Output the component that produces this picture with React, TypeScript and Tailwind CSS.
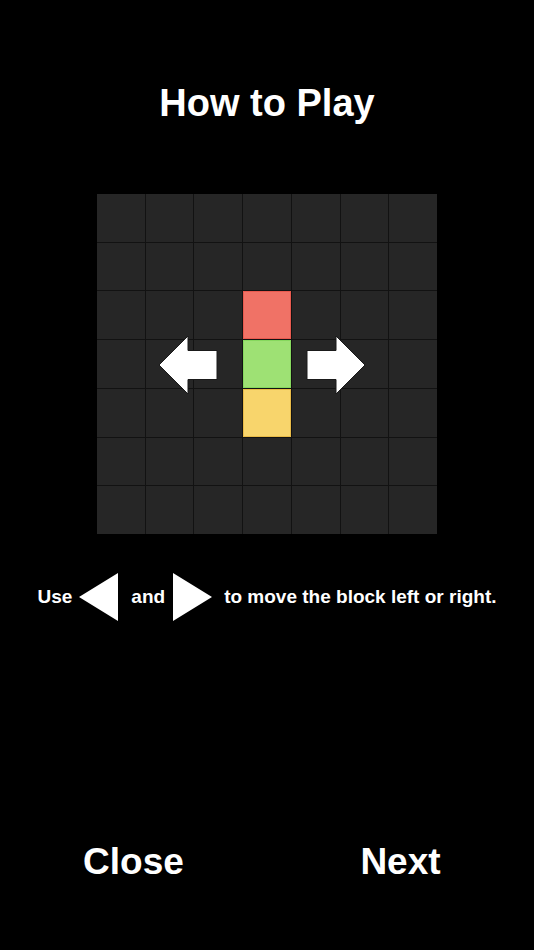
import React from "react";

const font = { fontFamily: '"Liberation Sans", Arial, sans-serif' };

function Cell({ r, c }: { r: number; c: number }) {
  if (c === 3 && r === 2)
    return <div className="bg-[#f07266] border border-[#e85a4f]" />;
  if (c === 3 && r === 3)
    return <div className="bg-[#9ee174] border border-[#86d85e]" />;
  if (c === 3 && r === 4)
    return <div className="bg-[#f8d56c] border border-[#e9bb48]" />;
  return <div className="bg-[#262626]" />;
}

export default function App() {
  const cells = [];
  for (let r = 0; r < 7; r++)
    for (let c = 0; c < 7; c++) cells.push(<Cell key={`${r}-${c}`} r={r} c={c} />);

  return (
    <div className="w-[534px] h-[950px] bg-black text-white flex flex-col items-center" style={font}>
      <h1 className="mt-[84px] h-[38px] leading-none text-[38px] font-bold">How to Play</h1>

      <div className="relative mt-[72px] w-[340px] h-[340px] grid grid-cols-7 grid-rows-7 gap-px bg-[#121212]">
        {cells}
        <svg className="absolute left-[61px] top-[141px]" width="60" height="60" viewBox="0 0 60 60">
          <polygon points="1,30 30,1 30,15.5 59,15.5 59,44.5 30,44.5 30,59" fill="#fff" stroke="#1a1a1a" strokeWidth="1" />
        </svg>
        <svg className="absolute left-[209px] top-[141px]" width="60" height="60" viewBox="0 0 60 60">
          <polygon points="59,30 30,1 30,15.5 1,15.5 1,44.5 30,44.5 30,59" fill="#fff" stroke="#1a1a1a" strokeWidth="1" />
        </svg>
      </div>

      <div className="mt-[39px] h-[48px] flex items-center text-[19px] font-bold">
        <span>Use</span>
        <svg className="ml-[7px]" width="39" height="48" viewBox="0 0 39 48">
          <polygon points="0,24 39,0 39,48" fill="#fff" />
        </svg>
        <span className="ml-[13px]">and</span>
        <svg className="ml-[8px]" width="39" height="48" viewBox="0 0 39 48">
          <polygon points="0,0 39,24 0,48" fill="#fff" />
        </svg>
        <span className="ml-[12px]">to move the block left or right.</span>
      </div>

      <div className="mt-auto mb-[70px] w-full grid grid-cols-2 text-[37px] font-bold leading-none">
        <button className="text-center">Close</button>
        <button className="text-center">Next</button>
      </div>
    </div>
  );
}
